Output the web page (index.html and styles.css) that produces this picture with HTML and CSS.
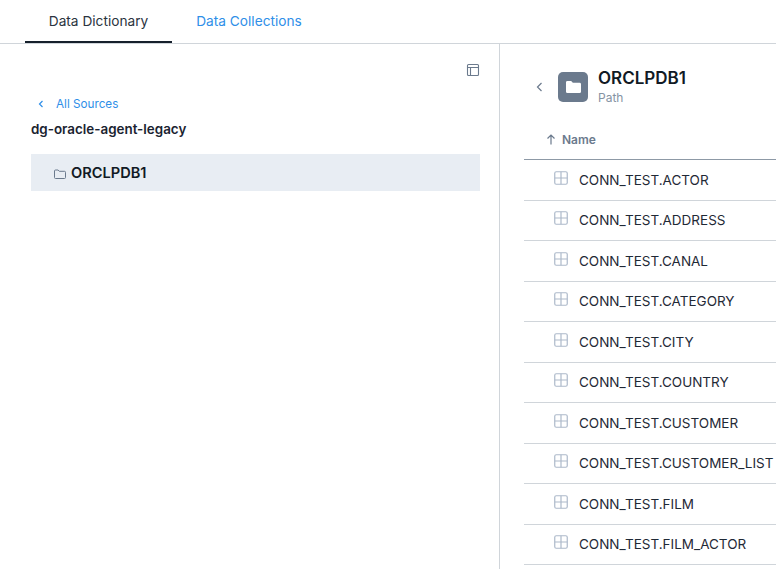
FILE: index.html
```html
<!DOCTYPE html>
<html lang="en">
<head>
    <meta charset="UTF-8">
    <title>Data Dictionary</title>
    <link rel="stylesheet" href="styles.css">
</head>
<body>
    <div class="tabs">
        <div class="tab active">Data Dictionary</div>
        <div class="tab">Data Collections</div>
    </div>
    <div class="main">
        <div class="left">
            <div class="left-tools">
                <svg width="14" height="14" viewBox="0 0 14 14" fill="none" stroke="#6b7a8d" stroke-width="1.1"><rect x="1.5" y="1.5" width="11" height="11" rx="1"/><path d="M1.5 4.5h11M4.5 4.5v8"/></svg>
            </div>
            <a class="back">
                <svg width="6" height="8" viewBox="0 0 6 8" fill="none" stroke="#2f8fe8" stroke-width="1.2"><path d="M4.5 1L1.5 4l3 3"/></svg>
                <span>All Sources</span>
            </a>
            <div class="source">dg-oracle-agent-legacy</div>
            <div class="tree-item">
                <svg class="tree-folder" width="12" height="11" viewBox="0 0 12 11" fill="none" stroke="#6b7a8d" stroke-width="1"><path d="M.5 2a1 1 0 0 1 1-1h2.6l1.2 1.3h5.2a1 1 0 0 1 1 1v5.2a1 1 0 0 1-1 1h-9a1 1 0 0 1-1-1z"/></svg>
                <span>ORCLPDB1</span>
            </div>
        </div>
        <div class="right">
            <div class="head">
                <svg class="head-back" width="7" height="10" viewBox="0 0 7 10" fill="none" stroke="#6b7a8d" stroke-width="1.2"><path d="M5.5 1L1.5 5l4 4"/></svg>
                <div class="head-icon">
                    <svg width="15" height="14" viewBox="0 0 16 14" fill="#fff"><path d="M0 2a1.5 1.5 0 0 1 1.5-1.5h4L7.3 2.5h7.2A1.5 1.5 0 0 1 16 4v8a1.5 1.5 0 0 1-1.5 1.5h-13A1.5 1.5 0 0 1 0 12z"/></svg>
                </div>
                <div>
                    <div class="head-title">ORCLPDB1</div>
                    <div class="head-sub">Path</div>
                </div>
            </div>
            <div class="table-head">
                <svg width="10" height="11" viewBox="0 0 10 11" fill="none" stroke="#6b7a8d" stroke-width="1.2"><path d="M5 10.5V1M1.5 4.5L5 1l3.5 3.5"/></svg>
                <span>Name</span>
            </div>
            <div class="row"><svg class="grid" width="14" height="14" viewBox="0 0 14 14"><rect x=".75" y=".75" width="12.5" height="12.5" rx="1.5"/><path d="M.75 7h12.5M7 .75v12.5"/></svg><span>CONN_TEST.ACTOR</span></div>
            <div class="row"><svg class="grid" width="14" height="14" viewBox="0 0 14 14"><rect x=".75" y=".75" width="12.5" height="12.5" rx="1.5"/><path d="M.75 7h12.5M7 .75v12.5"/></svg><span>CONN_TEST.ADDRESS</span></div>
            <div class="row"><svg class="grid" width="14" height="14" viewBox="0 0 14 14"><rect x=".75" y=".75" width="12.5" height="12.5" rx="1.5"/><path d="M.75 7h12.5M7 .75v12.5"/></svg><span>CONN_TEST.CANAL</span></div>
            <div class="row"><svg class="grid" width="14" height="14" viewBox="0 0 14 14"><rect x=".75" y=".75" width="12.5" height="12.5" rx="1.5"/><path d="M.75 7h12.5M7 .75v12.5"/></svg><span>CONN_TEST.CATEGORY</span></div>
            <div class="row"><svg class="grid" width="14" height="14" viewBox="0 0 14 14"><rect x=".75" y=".75" width="12.5" height="12.5" rx="1.5"/><path d="M.75 7h12.5M7 .75v12.5"/></svg><span>CONN_TEST.CITY</span></div>
            <div class="row"><svg class="grid" width="14" height="14" viewBox="0 0 14 14"><rect x=".75" y=".75" width="12.5" height="12.5" rx="1.5"/><path d="M.75 7h12.5M7 .75v12.5"/></svg><span>CONN_TEST.COUNTRY</span></div>
            <div class="row"><svg class="grid" width="14" height="14" viewBox="0 0 14 14"><rect x=".75" y=".75" width="12.5" height="12.5" rx="1.5"/><path d="M.75 7h12.5M7 .75v12.5"/></svg><span>CONN_TEST.CUSTOMER</span></div>
            <div class="row"><svg class="grid" width="14" height="14" viewBox="0 0 14 14"><rect x=".75" y=".75" width="12.5" height="12.5" rx="1.5"/><path d="M.75 7h12.5M7 .75v12.5"/></svg><span>CONN_TEST.CUSTOMER_LIST</span></div>
            <div class="row"><svg class="grid" width="14" height="14" viewBox="0 0 14 14"><rect x=".75" y=".75" width="12.5" height="12.5" rx="1.5"/><path d="M.75 7h12.5M7 .75v12.5"/></svg><span>CONN_TEST.FILM</span></div>
            <div class="row"><svg class="grid" width="14" height="14" viewBox="0 0 14 14"><rect x=".75" y=".75" width="12.5" height="12.5" rx="1.5"/><path d="M.75 7h12.5M7 .75v12.5"/></svg><span>CONN_TEST.FILM_ACTOR</span></div>
        </div>
    </div>
</body>
</html>
```

FILE: styles.css
```css
html, body {
    height: 100%;
}
body {
    margin: 0;
    overflow: hidden;
    background: #fff;
    color: #1a2330;
    font-family: "Inter", "Noto Sans", sans-serif;
    font-size: 14px;
}
.tabs {
    display: flex;
    height: 43px;
    padding-left: 25px;
    border-bottom: 1px solid #d0d5da;
}
.tab {
    width: 147px;
    height: 43px;
    box-sizing: border-box;
    line-height: 42px;
    text-align: center;
    font-size: 13.7px;
    color: #2f8fe8;
}
.tab + .tab {
    width: 154px;
}
.tab.active {
    color: #2b3440;
    border-bottom: 2px solid #16202c;
}
.main {
    display: flex;
    height: 525px;
    overflow: hidden;
}
.left {
    width: 500px;
    box-sizing: border-box;
    padding: 19px 19px 0 31px;
    border-right: 1px solid #d0d5da;
    flex-shrink: 0;
}
.left-tools {
    display: flex;
    justify-content: flex-end;
}
.back {
    display: flex;
    align-items: center;
    gap: 12px;
    margin-top: 19px;
    padding-left: 7px;
    font-size: 11.7px;
    line-height: 16px;
    color: #2f8fe8;
}
.source {
    margin-top: 8px;
    font-size: 13.4px;
    font-weight: 600;
    line-height: 18px;
}
.tree-item {
    display: flex;
    align-items: center;
    gap: 5px;
    height: 37px;
    margin-top: 16px;
    padding-left: 23px;
    background: #e8edf3;
    font-size: 14.6px;
    font-weight: 600;
    color: #111a24;
}
.tree-folder {
    margin-top: 3px;
}
.right {
    flex: 1;
    min-width: 0;
    padding-left: 24px;
}
.head {
    display: flex;
    align-items: center;
    height: 30px;
    margin-top: 28px;
}
.head-back {
    margin-left: 12px;
    margin-right: 15px;
}
.head-icon {
    display: flex;
    align-items: center;
    justify-content: center;
    width: 30px;
    height: 30px;
    margin-right: 10px;
    border-radius: 5px;
    background: #6b7a8d;
}
.head-title {
    font-size: 17px;
    font-weight: 600;
    line-height: 19px;
    color: #111a24;
}
.head-sub {
    margin-top: 2px;
    font-size: 12px;
    line-height: 16px;
    color: #8593a3;
}
.table-head {
    display: flex;
    align-items: center;
    gap: 6px;
    height: 39px;
    margin-top: 16px;
    padding: 2px 0 0 22px;
    font-size: 12px;
    font-weight: 600;
    color: #6b7a8d;
    border-bottom: 1px solid #8d99a6;
}
.row {
    display: flex;
    align-items: center;
    gap: 11px;
    height: 40.5px;
    box-sizing: border-box;
    padding-left: 30px;
    white-space: nowrap;
    font-size: 13.5px;
    color: #1f2936;
    border-bottom: 1px solid #d0d5da;
}
.grid {
    flex-shrink: 0;
    margin-top: -4px;
    fill: none;
    stroke: #adb9ca;
    stroke-width: 1.2;
}
```
